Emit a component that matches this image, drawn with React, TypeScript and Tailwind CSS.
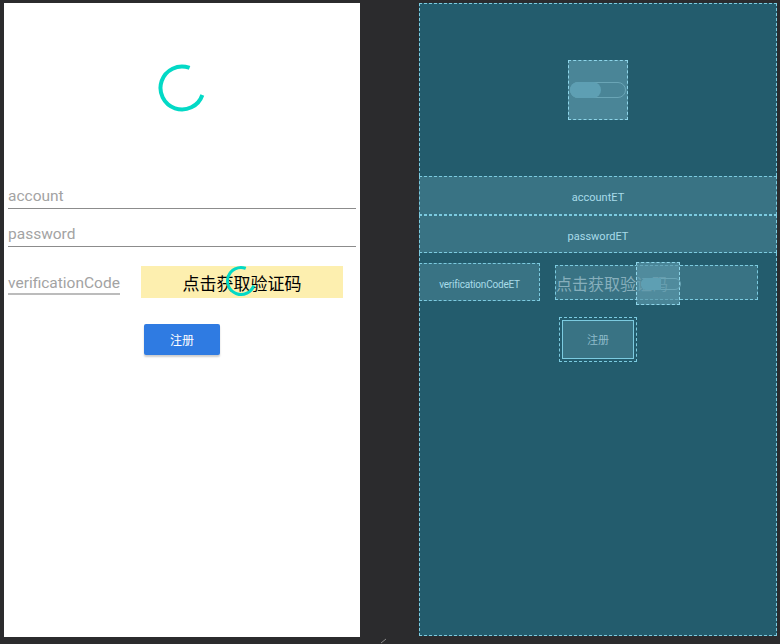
import React from 'react';

const CJK = "font-['Noto_Sans_CJK_SC',sans-serif]";

export default function App() {
  return (
    <div className="relative w-[780px] h-[644px] bg-[#2b2b2d] flex items-start pt-[3px] pl-[4px] overflow-hidden font-['Roboto',sans-serif]">
      <PhonePreview />
      <Blueprint />
      {/* resize grip mark */}
      <svg className="absolute left-[380px] top-[638px]" width="8" height="6" viewBox="0 0 8 6">
        <path d="M1 5 L6 1" stroke="#8a8a8a" strokeWidth="1" />
      </svg>
    </div>
  );
}

function Spinner({ size, r, stroke }: { size: number; r: number; stroke: number }) {
  const c = size / 2;
  const circ = 2 * Math.PI * r;
  return (
    <svg width={size} height={size} viewBox={`0 0 ${size} ${size}`}>
      <circle
        cx={c}
        cy={c}
        r={r}
        fill="none"
        stroke="#03d9c6"
        strokeWidth={stroke}
        strokeDasharray={`${circ * 0.75} ${circ}`}
        transform={`rotate(19 ${c} ${c})`}
      />
    </svg>
  );
}

function PhonePreview() {
  return (
    <div className="w-[356px] h-[634px] bg-white flex flex-col px-[4px] shrink-0">
      {/* progress spinner */}
      <div className="mt-[60px] h-[50px] flex justify-center">
        <Spinner size={50} r={21.5} stroke={4} />
      </div>

      {/* account */}
      <div className="mt-[72px] h-[24px] border-b border-[#8c8c8c] flex items-end">
        <span className="text-[15.5px] leading-[16px] pb-[4px] text-[#a3a3a3]">account</span>
      </div>

      {/* password */}
      <div className="mt-[13px] h-[25px] border-b border-[#8c8c8c] flex items-end">
        <span className="text-[15.5px] leading-[16px] pb-[4px] text-[#a3a3a3]">password</span>
      </div>

      {/* verification code row */}
      <div className="mt-[19px] flex items-start">
        <div className="w-[112px] h-[29px] border-b-2 border-[#bcbcbc] flex items-end">
          <span className="text-[15.5px] leading-[16px] pb-[2px] text-[#a3a3a3] whitespace-nowrap">verificationCode</span>
        </div>
        <div className="relative ml-[21px] w-[202px] h-[32px] bg-[#fdefaf] flex items-center justify-center">
          <span className={`${CJK} text-[17px] leading-none text-black`}>点击获取验证码</span>
          <div className="absolute left-[84px] -top-px">
            <Spinner size={32} r={13.5} stroke={3} />
          </div>
        </div>
      </div>

      {/* register button */}
      <button className="mt-[26px] ml-[136px] w-[76px] h-[31px] rounded-[2px] bg-[#2f7be2] shadow-[0_2px_2px_rgba(0,0,0,0.2)] flex items-center justify-center">
        <span className={`${CJK} text-[12px] text-white`}>注册</span>
      </button>
    </div>
  );
}

function BpSwitch() {
  return (
    <div className="relative w-[56px] h-[16px] rounded-full border border-[#6aa5b6]">
      <div className="absolute -left-px -top-px w-[31px] h-[16px] rounded-full bg-[#5e9fb3]" />
    </div>
  );
}

function Blueprint() {
  return (
    <div className="ml-[59px] w-[358px] h-[633px] bg-[#235c6d] border border-dashed border-[#7ccbe0] flex flex-col shrink-0">
      {/* top area with spinner outline */}
      <div className="h-[172px] flex justify-center pt-[56px]">
        <div className="w-[60px] h-[60px] bg-[#4a8597] border border-dashed border-[#8fd6ea] flex items-center pl-[1px]">
          <BpSwitch />
        </div>
      </div>

      <div className="h-[39px] -mx-px bg-[#397384] border border-dashed border-[#7ccbe0] flex items-center justify-center pt-[6px]">
        <span className="text-[11px] text-[#a8dbe9]">accountET</span>
      </div>
      <div className="h-[38px] -mx-px bg-[#397384] border border-dashed border-[#7ccbe0] flex items-center justify-center pt-[6px]">
        <span className="text-[11px] text-[#a8dbe9]">passwordET</span>
      </div>

      {/* verification row */}
      <div className="flex items-start">
        <div className="mt-[10px] -ml-px w-[121px] h-[38px] bg-[#397384] border border-dashed border-[#7ccbe0] flex items-center justify-center pt-[4px]">
          <span className="text-[10px] text-[#a8dbe9] tracking-[-0.2px]">verificationCodeET</span>
        </div>
        <div className="relative mt-[12px] ml-[15px] w-[203px] h-[35px] bg-[#397384] border border-dashed border-[#7ccbe0] flex items-center">
          <span className={`${CJK} text-[16px] leading-none text-[#87afbc]`}>点击获取验证码</span>
          <div className="absolute left-[80px] -top-[4px] w-[44px] h-[43px] bg-[#5a96a8]/70 border border-dashed border-[#8fd6ea] flex items-center pl-[4px]">
            <div className="relative w-[40px] h-[12px] rounded-full border border-[#6aa5b6] -mr-[4px]">
              <div className="absolute -left-px -top-px w-[20px] h-[12px] rounded-l-full bg-[#5e9fb3]" />
            </div>
          </div>
        </div>
      </div>

      {/* button outline */}
      <div className="mt-[16px] ml-[139px] w-[78px] h-[45px] border border-dashed border-[#7ccbe0] p-[2px]">
        <div className="w-full h-full bg-[#397384] border border-[#7ccbe0] flex items-center justify-center">
          <span className={`${CJK} text-[11px] text-[#8fbccb]`}>注册</span>
        </div>
      </div>
    </div>
  );
}
